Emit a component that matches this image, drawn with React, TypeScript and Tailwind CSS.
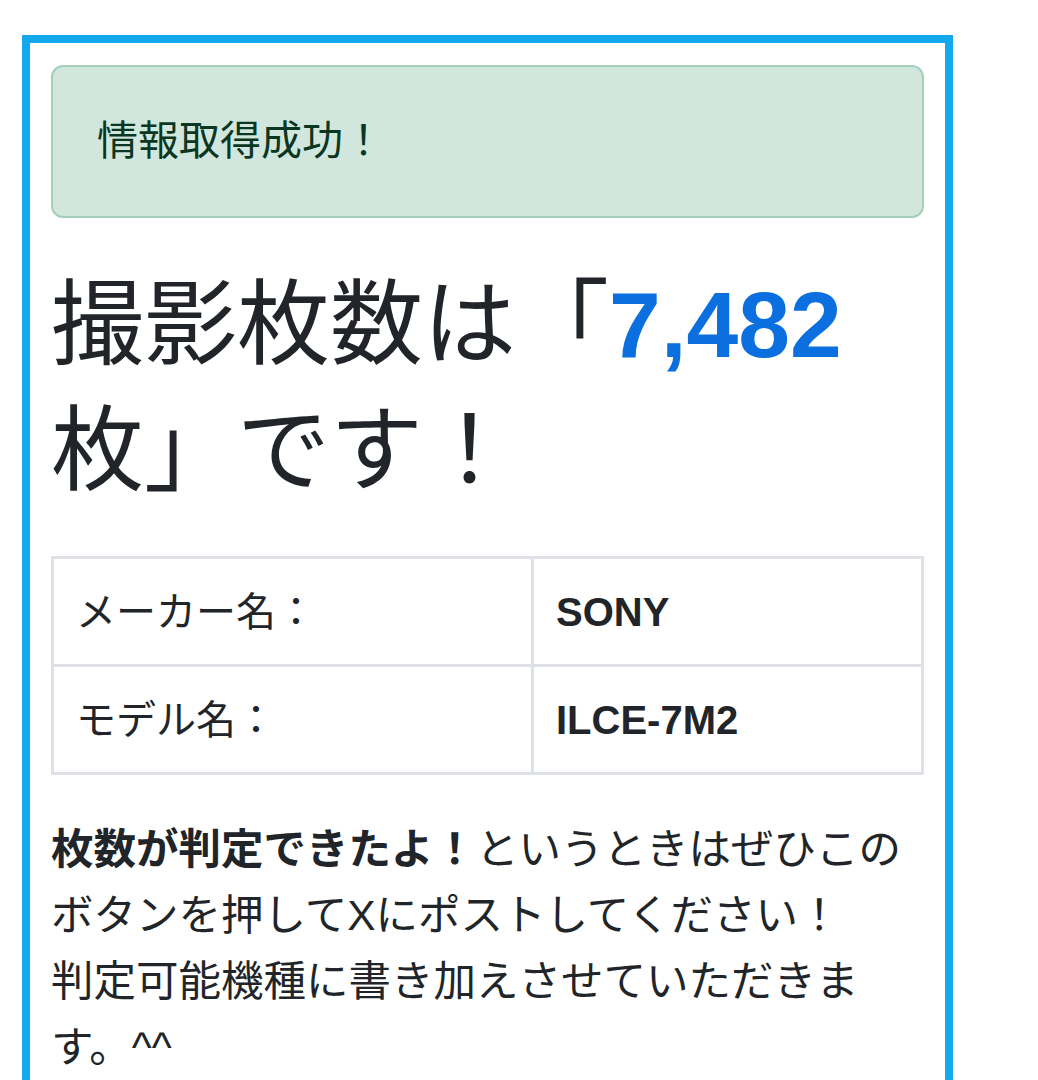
import React from 'react';

const font = { fontFamily: '"Liberation Sans", "Noto Sans CJK JP", sans-serif' };

export default function App() {
  return (
    <div className="min-h-[1080px] bg-white text-[#212529]" style={font}>
      <div className="pt-[35px] pl-[22px] w-[953px]">
        <div className="border-[8px] border-[#12a9ee] border-b-0 px-[21px] pt-[22px] pb-[200px]">
          {/* alert */}
          <div className="rounded-[12px] border-2 border-[#a3cfbb] bg-[#d1e7dd] px-[44px] py-[44px] text-[41px] leading-[61px] text-[#0a3622]">
            情報取得成功！
          </div>

          {/* headline */}
          <h1 className="mt-[44px] text-[93px] leading-[126px] font-normal">
            撮影枚数は「<span className="font-bold text-[#0b6fe0]">7,482</span>
            <br />
            枚」です！
          </h1>

          {/* table */}
          <table className="mt-[42px] w-full border-collapse text-[40px]">
            <tbody>
              <tr className="h-[108px]">
                <td className="w-[480px] border-[3px] border-[#dee2e6] px-[22px]">メーカー名：</td>
                <td className="border-[3px] border-[#dee2e6] px-[22px] font-bold">SONY</td>
              </tr>
              <tr className="h-[108px]">
                <td className="w-[480px] border-[3px] border-[#dee2e6] px-[22px]">モデル名：</td>
                <td className="border-[3px] border-[#dee2e6] px-[22px] font-bold">ILCE-7M2</td>
              </tr>
            </tbody>
          </table>

          {/* note */}
          <p className="mt-[42px] text-[42.5px] leading-[66px]">
            <b className="font-bold">枚数が判定できたよ！</b>というときはぜひこのボタンを押してXにポストしてください！
            <br />
            判定可能機種に書き加えさせていただきます。^^
          </p>
        </div>
      </div>
    </div>
  );
}
